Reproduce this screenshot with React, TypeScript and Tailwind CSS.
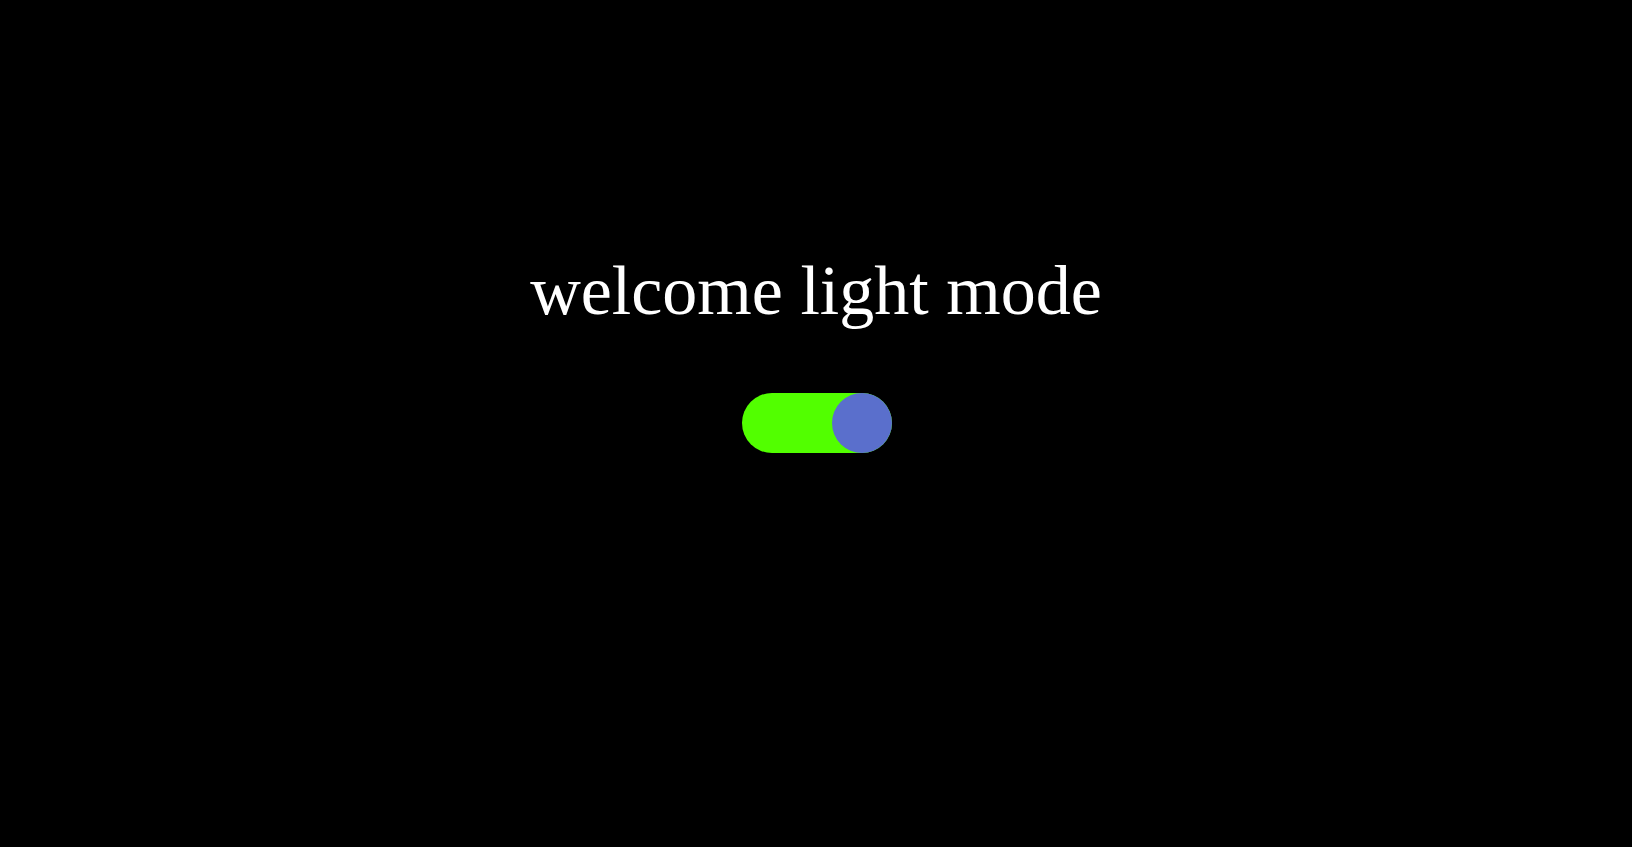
export default function App() {
  return (
    <div className="w-full h-screen bg-black flex flex-col items-center">
      <h1 className="mt-[251px] text-white text-[70px] leading-[80px] font-normal" style={{ fontFamily: '"Liberation Serif", serif' }}>
        welcome light mode
      </h1>
      <div className="mt-[62px] ml-[1px] w-[150px] h-[60px] rounded-full bg-[#52ff00] flex justify-end">
        <div className="w-[60px] h-[60px] rounded-full bg-[#5a6fcc]" />
      </div>
    </div>
  );
}
